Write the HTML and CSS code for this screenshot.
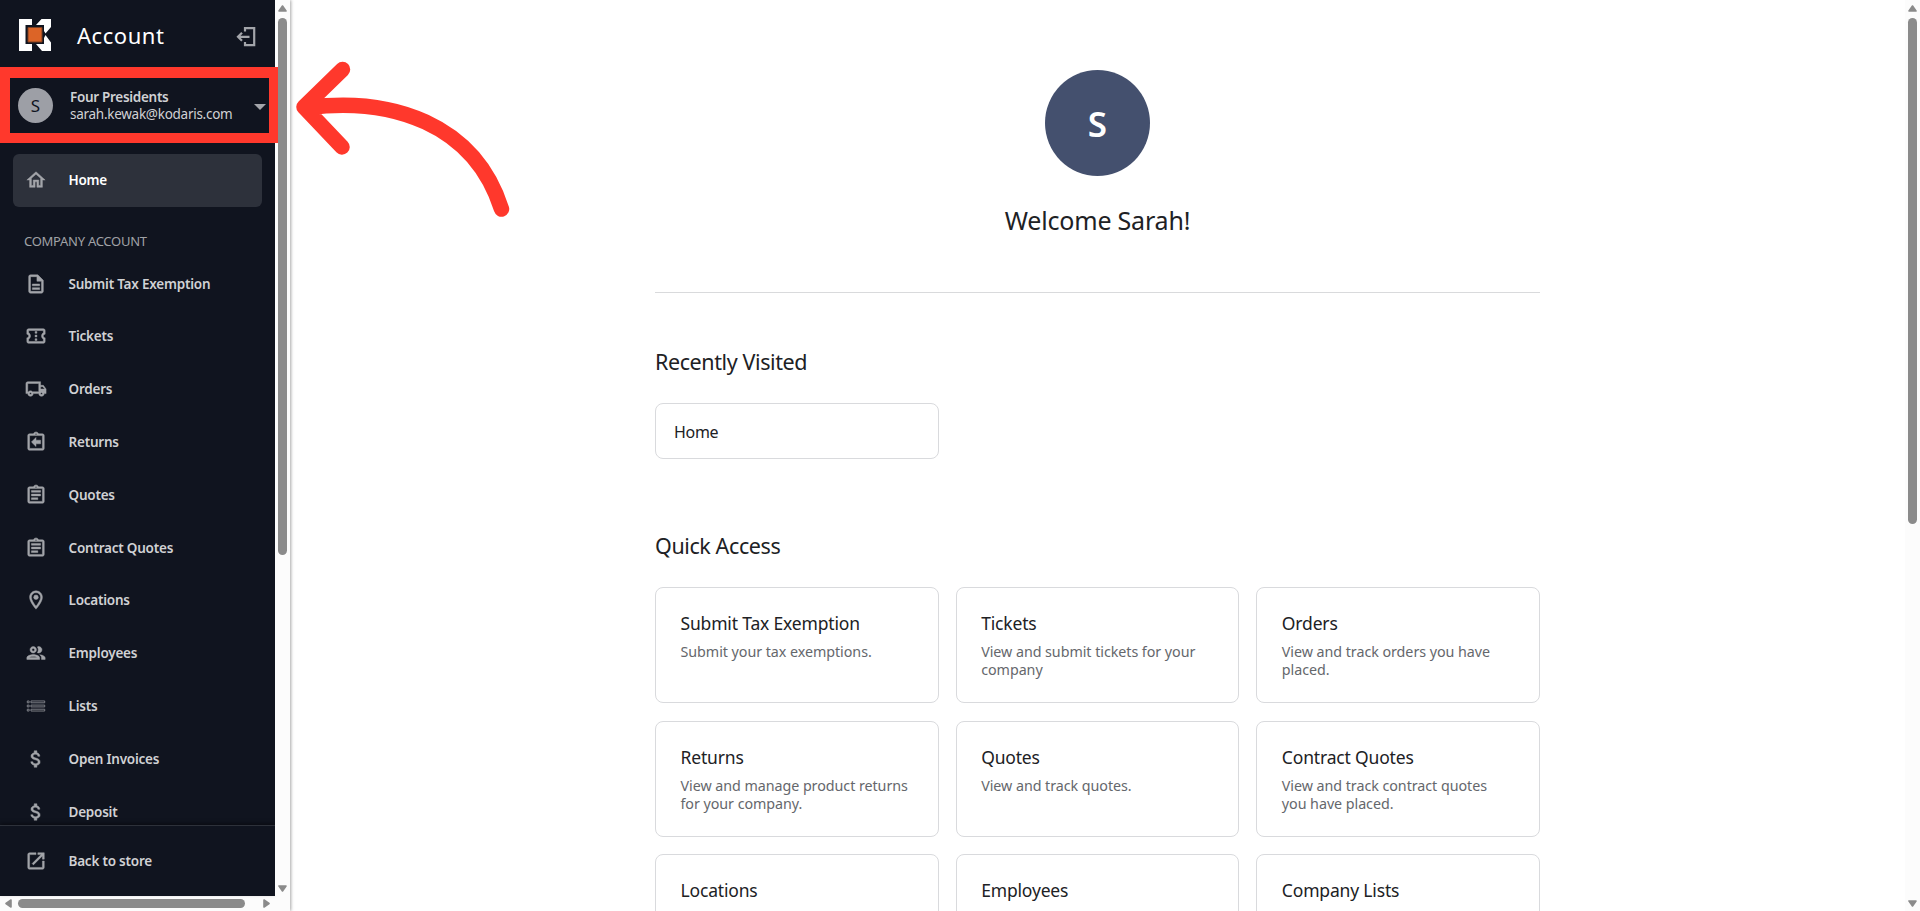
FILE: index.html
```html
<!DOCTYPE html>
<html lang="en">
<head>
    <meta charset="UTF-8">
    <meta name="viewport" content="width=device-width, initial-scale=1.0">
    <title>Account</title>
    <link rel="stylesheet" href="styles.css">
</head>
<body>
    <!-- shared icons -->
    <svg class="sprite" width="0" height="0">
        <symbol id="clipboard" viewBox="0 0 24 24"><path fill-rule="evenodd" d="M19 3h-4.18C14.4 1.84 13.3 1 12 1s-2.4.84-2.82 2H5c-1.1 0-2 .9-2 2v14c0 1.1.9 2 2 2h14c1.1 0 2-.9 2-2V5c0-1.1-.9-2-2-2zm-7-.25c.41 0 .75.34.75.75s-.34.75-.75.75-.75-.34-.75-.75.34-.75.75-.75zM19 19H5V5h14v14z"/></symbol>
        <symbol id="dollar" viewBox="0 0 24 24"><path d="M11.8 10.9c-2.27-.59-3-1.2-3-2.15 0-1.09 1.01-1.85 2.7-1.85 1.78 0 2.44.85 2.5 2.1h2.21c-.07-1.72-1.12-3.3-3.21-3.81V3h-3v2.16c-1.94.42-3.5 1.68-3.5 3.61 0 2.31 1.91 3.46 4.7 4.13 2.5.6 3 1.48 3 2.41 0 .69-.49 1.79-2.7 1.79-2.06 0-2.87-.92-2.98-2.1h-2.2c.12 2.19 1.76 3.42 3.68 3.83V21h3v-2.15c1.95-.37 3.5-1.5 3.5-3.55 0-2.84-2.43-3.81-4.7-4.4"/></symbol>
        <symbol id="tri-up" viewBox="0 0 9 7"><path d="M4.5 1 8 6H1z" stroke="#8b8b8b" stroke-width="1.6" stroke-linejoin="round"/></symbol>
    </svg>

    <div class="drawer">
        <div class="drawer-top">
            <aside class="sidebar">
                <header class="brand">
                    <svg class="logo" viewBox="0 0 32 32">
                        <path fill="#fff" d="M0 0h13v6H6.500v19H13v7H0zM22.500 0H32v8l-5.500 6.500-1.500-2.500V6h-8zM17 25h8v-6l1.500-3L32 23.500V32h-9z"/>
                        <path fill="#dc6427" stroke="#7c3f22" d="M9 8.500h14v14.500H9z"/>
                    </svg>
                    <h1>Account</h1>
                    <svg class="logout" viewBox="0 0 20 20"><path d="M9 4.500V1.200h9.200v17H9V15M13.500 9.800H2M6 5.800l-4 4 4 4"/></svg>
                </header>
                <div class="user">
                    <span class="user-avatar">S</span>
                    <div class="user-info">
                        <b>Four Presidents</b>
                        <span>sarah.kewak@kodaris.com</span>
                    </div>
                    <i class="caret"></i>
                </div>
                <nav class="menu">
                    <a class="item active"><svg viewBox="0 0 24 24"><path d="m12 5.690 5 4.500V18h-2v-6H9v6H7v-7.810zM12 3 2 12h3v8h6v-6h2v6h6v-8h3z"/></svg>Home</a>
                    <h2>COMPANY ACCOUNT</h2>
                    <a class="item"><svg viewBox="0 0 24 24"><path d="M8 16h8v2H8zm0-4h8v2H8zm6-10H6c-1.100 0-2 .9-2 2v16c0 1.100.890 2 1.990 2H18c1.100 0 2-.9 2-2V8zm4 18H6V4h7v5h5z"/></svg>Submit Tax Exemption</a>
                    <a class="item"><svg viewBox="0 0 24 24"><path d="M22 10V6c0-1.110-.9-2-2-2H4c-1.100 0-1.990.89-1.990 2v4c1.100 0 1.990.9 1.990 2s-.89 2-2 2v4c0 1.100.9 2 2 2h16c1.100 0 2-.9 2-2v-4c-1.100 0-2-.9-2-2s.9-2 2-2m-2-1.460c-1.190.69-2 1.990-2 3.460s.81 2.770 2 3.460V18H4v-2.540c1.190-.69 2-1.990 2-3.460 0-1.480-.8-2.770-1.990-3.460L4 6h16zM11 15h2v2h-2zm0-4h2v2h-2zm0-4h2v2h-2z"/></svg>Tickets</a>
                    <a class="item"><svg viewBox="0 0 24 24"><path d="M20 8h-3V4H3c-1.100 0-2 .9-2 2v11h2c0 1.660 1.340 3 3 3s3-1.340 3-3h6c0 1.660 1.340 3 3 3s3-1.340 3-3h2v-5zm-.5 1.500 1.960 2.500H17V9.500zM6 18c-.55 0-1-.45-1-1s.45-1 1-1 1 .45 1 1-.45 1-1 1m2.220-3c-.55-.61-1.330-1-2.220-1s-1.670.39-2.220 1H3V6h12v9zM18 18c-.55 0-1-.45-1-1s.45-1 1-1 1 .45 1 1-.45 1-1 1"/></svg>Orders</a>
                    <a class="item"><svg viewBox="0 0 24 24"><use href="#clipboard"/><path d="M17 10h-5V7l-5 5 5 5v-3h5z"/></svg>Returns</a>
                    <a class="item"><svg viewBox="0 0 24 24"><use href="#clipboard"/><path d="M7 15h7v2H7zm0-4h10v2H7zm0-4h10v2H7z"/></svg>Quotes</a>
                    <a class="item"><svg viewBox="0 0 24 24"><use href="#clipboard"/><path d="M7 15h7v2H7zm0-4h10v2H7zm0-4h10v2H7z"/></svg>Contract Quotes</a>
                    <a class="item"><svg viewBox="0 0 24 24"><path d="M12 2C8.130 2 5 5.130 5 9c0 5.250 7 13 7 13s7-7.750 7-13c0-3.870-3.130-7-7-7M7 9c0-2.760 2.240-5 5-5s5 2.240 5 5c0 2.880-2.880 7.190-5 9.880C9.920 16.210 7 11.850 7 9"/><circle cx="12" cy="9" r="2.500"/></svg>Locations</a>
                    <a class="item"><svg viewBox="0 0 24 24"><path d="M9 13.750c-2.340 0-7 1.170-7 3.500V19h14v-1.750c0-2.330-4.660-3.500-7-3.500M4.340 17c.84-.58 2.870-1.250 4.660-1.250s3.820.67 4.660 1.250zM9 12c1.930 0 3.500-1.570 3.500-3.500S10.930 5 9 5 5.500 6.570 5.500 8.500 7.070 12 9 12m0-5c.83 0 1.500.67 1.500 1.500S9.830 10 9 10s-1.500-.67-1.500-1.500S8.170 7 9 7m7.040 6.810c1.160.84 1.960 1.960 1.960 3.440V19h4v-1.750c0-2.020-3.500-3.170-5.960-3.440M15 12c1.930 0 3.500-1.570 3.500-3.500S16.930 5 15 5c-.54 0-1.040.13-1.500.35.63.89 1 1.980 1 3.150s-.37 2.260-1 3.150c.46.22.96.35 1.500.35"/></svg>Employees</a>
                    <a class="item"><svg viewBox="0 0 24 24"><path class="thin" d="M2.500 6.500h2v2h-2zm4 0h15v2h-15zM2.500 11h2v2h-2zm4 0h15v2h-15zM2.500 15.500h2v2h-2zm4 0h15v2h-15z"/></svg>Lists</a>
                    <a class="item"><svg viewBox="0 0 24 24"><use href="#dollar"/></svg>Open Invoices</a>
                    <a class="item"><svg viewBox="0 0 24 24"><use href="#dollar"/></svg>Deposit</a>
                </nav>
                <footer class="back">
                    <a class="item"><svg viewBox="0 0 24 24"><path d="M19 19H5V5h7V3H5c-1.110 0-2 .9-2 2v14c0 1.100.890 2 2 2h14c1.100 0 2-.9 2-2v-7h-2zM14 3v2h3.590l-9.830 9.830 1.410 1.410L19 6.410V10h2V3z"/></svg>Back to store</a>
                </footer>
            </aside>
            <div class="scroll-y">
                <svg class="tri"><use href="#tri-up"/></svg>
                <div class="thumb drawer-thumb"></div>
                <svg class="tri down"><use href="#tri-up"/></svg>
            </div>
        </div>
        <div class="scroll-x">
            <svg class="tri left"><use href="#tri-up"/></svg>
            <div class="thumb"></div>
            <svg class="tri right"><use href="#tri-up"/></svg>
        </div>
    </div>

    <main class="main">
        <div class="page">
            <section class="welcome">
                <div class="avatar">S</div>
                <h2>Welcome Sarah!</h2>
            </section>
            <section class="recent">
                <h3>Recently Visited</h3>
                <a class="recent-card">Home</a>
            </section>
            <section class="quick">
                <h3>Quick Access</h3>
                <div class="grid">
                    <a class="card"><h4>Submit Tax Exemption</h4><p>Submit your tax exemptions.</p></a>
                    <a class="card"><h4>Tickets</h4><p>View and submit tickets for your company</p></a>
                    <a class="card"><h4>Orders</h4><p>View and track orders you have placed.</p></a>
                    <a class="card"><h4>Returns</h4><p>View and manage product returns for your company.</p></a>
                    <a class="card"><h4>Quotes</h4><p>View and track quotes.</p></a>
                    <a class="card"><h4>Contract Quotes</h4><p>View and track contract quotes you have placed.</p></a>
                    <a class="card"><h4>Locations</h4></a>
                    <a class="card"><h4>Employees</h4></a>
                    <a class="card"><h4>Company Lists</h4></a>
                </div>
            </section>
        </div>
    </main>
    <div class="scroll-y">
        <svg class="tri"><use href="#tri-up"/></svg>
        <div class="thumb page-thumb"></div>
        <svg class="tri down"><use href="#tri-up"/></svg>
    </div>

    <!-- callout drawn over the page -->
    <div class="highlight"></div>
    <svg class="arrow" viewBox="0 0 220 160"><path d="M46.500 9.500 8 47l38 40M12 47.500C95 37 178 63 205.500 149"/></svg>
</body>
</html>
```

FILE: styles.css
```css
* {
    box-sizing: border-box;
    margin: 0;
    padding: 0;
}

body {
    display: flex;
    height: 911px;
    overflow: hidden;
    background: #fff;
    color: #202124;
    font-family: "Segoe UI", "Noto Sans", sans-serif;
}

h1, h2, h3, h4 {
    font-weight: 400;
}

.sprite {
    position: absolute;
}

/* left drawer */
.drawer {
    display: flex;
    flex-direction: column;
    width: 290px;
    flex-shrink: 0;
    background: #fcfcfc;
    box-shadow: 1px 0 3px rgba(0, 0, 0, 0.35);
}

.drawer-top {
    display: flex;
    height: 896px;
}

.sidebar {
    display: flex;
    flex-direction: column;
    width: 275px;
    background: #10141f;
    color: #d0d1d4;
}

.brand {
    display: flex;
    align-items: center;
    height: 72px;
    padding: 0 19px 2px 19px;
}

.logo {
    width: 32px;
    height: 32px;
}

.brand h1 {
    flex: 1;
    margin-left: 26px;
    color: #fff;
    font-size: 22px;
    line-height: 30px;
    letter-spacing: 0.55px;
}

.logout {
    width: 20px;
    height: 20px;
    margin-top: 4px;
    fill: none;
    stroke: #a3a5aa;
    stroke-width: 2.2;
}

.user {
    display: flex;
    align-items: center;
    height: 67px;
    padding: 0 9px 0 18px;
}

.user-avatar {
    width: 35px;
    height: 35px;
    border-radius: 50%;
    background: #9d9fa6;
    color: #10141f;
    font-size: 17px;
    line-height: 35px;
    text-align: center;
}

.user-info {
    display: flex;
    flex: 1;
    flex-direction: column;
    margin-left: 17px;
    font-size: 13.5px;
    line-height: 17px;
}

.user-info b {
    font-weight: 600;
    letter-spacing: -0.3px;
}

.user-info span {
    letter-spacing: -0.27px;
}

.caret {
    margin-top: 3px;
    border: 6px solid transparent;
    border-top-color: #a3a5aa;
    border-bottom: 0;
}

.menu {
    flex: 1;
    overflow: hidden;
    padding: 15px 13px 0;
}

.item {
    display: flex;
    align-items: center;
    gap: 22px;
    height: 52.8px;
    padding-left: 11.5px;
    border-radius: 6px;
    font-size: 13.5px;
    font-weight: 600;
    letter-spacing: -0.22px;
}

.item svg {
    width: 22px;
    height: 22px;
    fill: #a3a5aa;
    stroke: #a3a5aa;
    stroke-width: 0.5;
}

.item .thin {
    fill: none;
    stroke: #85888e;
    stroke-width: 1;
}

.active {
    background: #2d313b;
    color: #fff;
}

.menu h2 {
    height: 50.5px;
    padding: 25px 0 0 11px;
    color: #a0a2a6;
    font-size: 13px;
    line-height: 18px;
    letter-spacing: -0.27px;
}

.back {
    height: 71px;
    padding: 8.5px 13px;
    border-top: 1px solid #2d313a;
    box-shadow: 0 -2px 4px rgba(0, 0, 0, 0.4);
}

/* scrollbars */
.scroll-y {
    display: flex;
    flex-direction: column;
    align-items: center;
    width: 15px;
    flex-shrink: 0;
    padding: 5px 0 4px;
    background: #fcfcfc;
}

.scroll-x {
    display: flex;
    align-items: center;
    height: 15px;
    padding: 0 4px;
}

.tri {
    width: 9px;
    height: 7px;
    fill: #8b8b8b;
}

.down {
    margin-top: auto;
    transform: rotate(180deg);
}

.left {
    transform: rotate(-90deg);
}

.right {
    margin-left: 17px;
    transform: rotate(90deg);
}

.thumb {
    width: 9px;
    margin-top: 6px;
    border-radius: 5px;
    background: #8b8b8b;
}

.drawer-thumb {
    height: 537px;
}

.page-thumb {
    height: 506px;
}

.scroll-x .thumb {
    width: 227px;
    height: 9px;
    margin: 0 0 0 5px;
}

/* main page */
.main {
    flex: 1;
    height: 911px;
    overflow: hidden;
}

.page {
    width: 885px;
    margin: 0 auto;
}

.welcome {
    display: flex;
    flex-direction: column;
    align-items: center;
    height: 293px;
    padding-top: 70px;
    border-bottom: 1px solid #d9dadc;
}

.avatar {
    width: 105px;
    height: 106px;
    border-radius: 50%;
    background: #44506e;
    color: #fff;
    font-size: 35px;
    font-weight: 600;
    line-height: 108px;
    text-align: center;
}

.welcome h2 {
    margin-top: 26px;
    font-size: 25px;
    line-height: 36px;
    letter-spacing: -0.2px;
}

.page h3 {
    height: 30px;
    font-size: 21.5px;
    line-height: 30px;
    letter-spacing: -0.4px;
}

.recent {
    height: 184px;
    padding-top: 54px;
}

.recent-card {
    display: flex;
    align-items: center;
    width: 284px;
    height: 56px;
    margin-top: 26px;
    padding: 2px 0 0 18px;
    border: 1px solid #d9dadd;
    border-radius: 8px;
    font-size: 16px;
    letter-spacing: -0.3px;
}

.quick {
    padding-top: 54px;
}

.grid {
    display: grid;
    grid-template-columns: repeat(3, 1fr);
    grid-auto-rows: 116px;
    gap: 17.7px 17px;
    margin-top: 26px;
}

.card {
    padding: 22px 26px 0 24.5px;
    border: 1px solid #d9dadd;
    border-radius: 8px;
}

.card h4 {
    font-size: 17.5px;
    line-height: 26px;
    letter-spacing: -0.17px;
}

.card p {
    margin-top: 7px;
    color: #65676c;
    font-size: 14.3px;
    line-height: 18px;
    letter-spacing: -0.05px;
}

/* callout */
.highlight {
    position: absolute;
    top: 67px;
    left: 0;
    width: 278px;
    height: 76px;
    border: 10px solid #ff382c;
    border-top-width: 11px;
    border-right-width: 9.500px;
}

.arrow {
    position: absolute;
    top: 60px;
    left: 296px;
    width: 220px;
    height: 160px;
    fill: none;
    stroke: #ff382c;
    stroke-width: 15.5;
    stroke-linecap: round;
    stroke-linejoin: round;
}
```
